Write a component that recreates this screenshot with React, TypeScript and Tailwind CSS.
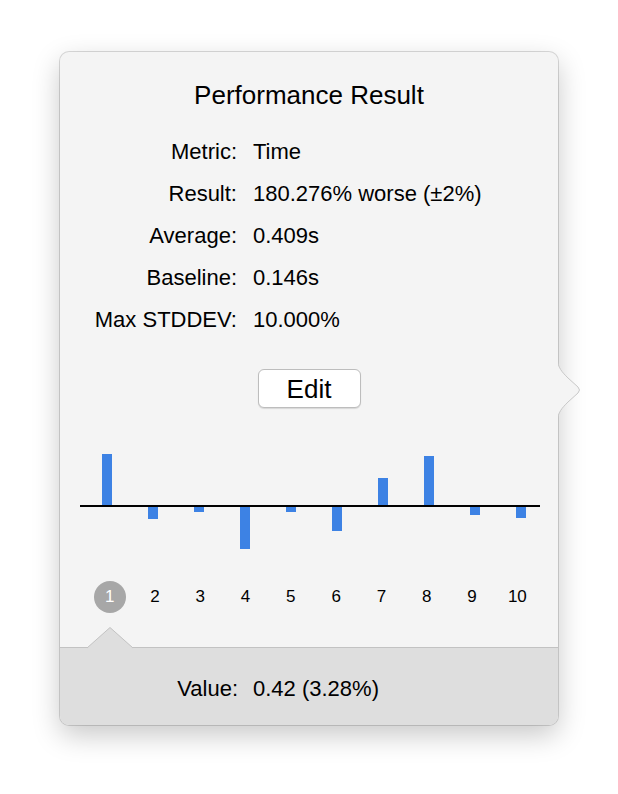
import React from 'react';

const rows = [
    { label: "Metric:", value: "Time" },
    { label: "Result:", value: "180.276% worse (±2%)" },
    { label: "Average:", value: "0.409s" },
    { label: "Baseline:", value: "0.146s" },
    { label: "Max STDDEV:", value: "10.000%" },
];

// bar heights in px, positive = above the zero line
const bars = [52, -13, -6, -43, -6, -25, 28, 50, -9, -12];

function Chart() {
    const zero = 66;
    return (
        <svg width="498" height="120" className="block">
            {bars.map((h, i) => {
                const x = 42 + i * 46;
                const y = h > 0 ? zero - h : zero;
                return <rect key={i} x={x} y={y} width="10" height={Math.abs(h)} fill="#3d82e4" />;
            })}
            <rect x="20" y={zero - 1} width="460" height="2" fill="#000" />
        </svg>
    );
}

export default function App() {
    return (
        <div className="min-h-screen bg-white pt-[52px] pl-[60px]" style={{ fontFamily: '"Liberation Sans", Arial, sans-serif' }}>
            <div className="relative w-[498px] rounded-[9px] bg-[#f4f4f4] shadow-[0_0_0_1px_rgba(0,0,0,0.14),0_10px_28px_rgba(0,0,0,0.22)]">
                {/* side arrow */}
                <svg width="28" height="64" className="absolute right-[-26px] top-[306px]">
                    <path
                        d="M1 0 C2 10 6 14 12 20 L22 29 Q25 32 22 35 L12 44 C6 50 2 54 1 64 Z"
                        fill="#f4f4f4"
                        stroke="#c9c9c9"
                        strokeWidth="1"
                    />
                    <rect x="0" y="0" width="2" height="64" fill="#f4f4f4" />
                </svg>

                <div className="pt-[27px] text-center text-[26px] leading-[32px] text-black">Performance Result</div>

                <div className="mt-[20px] grid grid-cols-[177px_1fr] text-[22px] leading-[42px] text-black">
                    {rows.map((r) => (
                        <React.Fragment key={r.label}>
                            <div className="text-right">{r.label}</div>
                            <div className="pl-[16px]">{r.value}</div>
                        </React.Fragment>
                    ))}
                </div>

                <div className="mt-[28px] flex justify-center">
                    <button className="h-[39px] w-[103px] rounded-[6px] border border-[#bdbdbd] bg-white text-[26px] leading-none text-black shadow-[0_1px_1px_rgba(0,0,0,0.12)]">
                        Edit
                    </button>
                </div>

                <div className="mt-[32px]">
                    <Chart />
                </div>

                <div className="mt-[21px] ml-[27px] grid w-[453px] grid-cols-10 text-[17px] text-black">
                    {bars.map((_, i) => (
                        <div key={i} className="flex h-[32px] items-center justify-center">
                            {i === 0 ? (
                                <span className="flex h-[32px] w-[32px] items-center justify-center rounded-full bg-[#a7a7a7] text-white">1</span>
                            ) : (
                                <span>{i + 1}</span>
                            )}
                        </div>
                    ))}
                </div>

                <div className="relative mt-[34px] rounded-b-[9px] border-t border-[#c2c2c2] bg-[#dedede] pt-[20px] pb-[15px]">
                    <svg width="46" height="22" className="absolute left-[27px] top-[-21px]">
                        <path d="M0 21 L23 0.5 L46 21" fill="#dedede" stroke="#c2c2c2" strokeWidth="1" />
                    </svg>
                    <div className="grid grid-cols-[178px_1fr] text-[22px] leading-[42px] text-black">
                        <div className="text-right">Value:</div>
                        <div className="pl-[15px]">0.42 (3.28%)</div>
                    </div>
                </div>
            </div>
        </div>
    );
}
